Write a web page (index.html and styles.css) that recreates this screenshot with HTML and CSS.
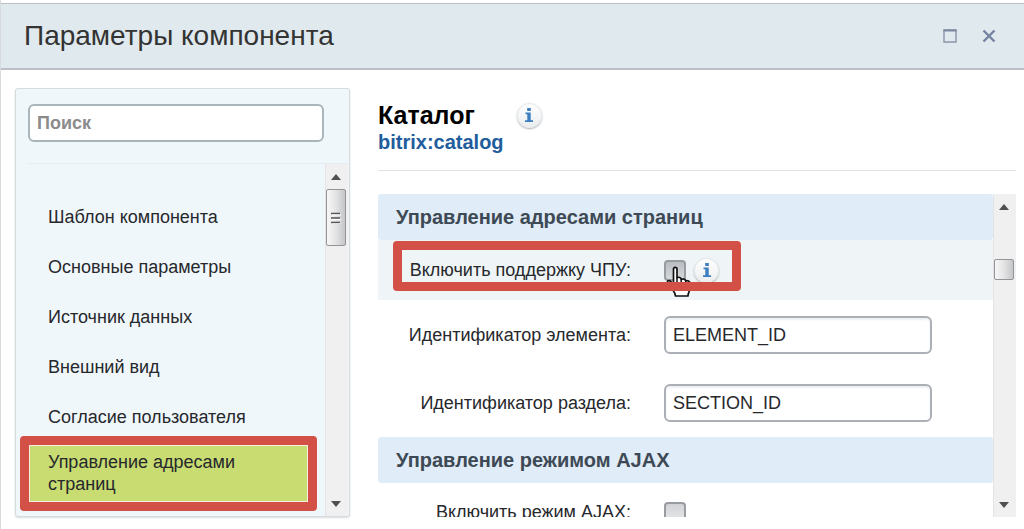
FILE: index.html
```html
<!DOCTYPE html>
<html lang="ru">
<head>
<meta charset="utf-8">
<title>Параметры компонента</title>
<meta name="viewport" content="width=device-width, initial-scale=1">
<link rel="stylesheet" href="styles.css">
</head>
<body>
<div class="dialog">
  <header class="dialog-header">
    <h1 class="dialog-title">Параметры компонента</h1>
    <div class="window-buttons">
      <button class="window-button" type="button" aria-label="Развернуть">
        <svg width="14" height="14" viewBox="0 0 14 14"><path d="M1 1h12v12H1z" fill="none" stroke="#8c94ab" stroke-width="1.4"/><path d="M0.500 1.500h13" stroke="#7c86a1" stroke-width="2"/></svg>
      </button>
      <button class="window-button" type="button" aria-label="Закрыть">
        <svg width="14" height="14" viewBox="0 0 14 14"><path d="M1.500 1.500l11 11M12.500 1.500l-11 11" stroke="#7583a2" stroke-width="2.4"/></svg>
      </button>
    </div>
  </header>
  <div class="dialog-body">
    <aside class="sidebar">
      <input class="search" type="search" placeholder="Поиск" aria-label="Поиск">
      <div class="sidebar-scroll">
        <nav class="menu">
          <a class="menu-item" href="#template">Шаблон компонента</a>
          <a class="menu-item" href="#base">Основные параметры</a>
          <a class="menu-item" href="#source">Источник данных</a>
          <a class="menu-item" href="#visual">Внешний вид</a>
          <a class="menu-item" href="#consent">Согласие пользователя</a>
          <a class="menu-item menu-item-active" href="#sef">Управление адресами страниц<span class="marker"></span></a>
        </nav>
        <div class="scrollbar scrollbar-menu">
          <svg class="arrow" width="10" height="6" viewBox="0 0 10 6"><path d="M0 6L5 0l5 6z" fill="#505050"/></svg>
          <div class="thumb">
            <svg width="10" height="12" viewBox="0 0 10 12"><path d="M0 1.500h9M0 6h9M0 10.500h9" stroke="#555" stroke-width="1.600"/><path d="M1 3h9M1 7.500h9M1 12h9" stroke="#fff"/></svg>
          </div>
          <svg class="arrow arrow-down" width="10" height="6" viewBox="0 0 10 6"><path d="M0 0h10L5 6z" fill="#505050"/></svg>
        </div>
      </div>
    </aside>
    <main class="content">
      <div class="component">
        <div class="component-name">
          <h2 class="component-title">Каталог</h2>
          <button class="info" type="button" aria-label="Справка">
            <svg width="10" height="14" viewBox="0 0 10 14"><path d="M3.200 0h3.600v3H3.200zM1.500 4.500h5.200v7.700H9V14H1v-1.800h2.300V6.300H1.500z" fill="#3c7fc0"/></svg>
          </button>
        </div>
        <a class="component-code" href="#catalog">bitrix:catalog</a>
      </div>
      <div class="params-scroll">
        <form class="params">
          <h3 class="section">Управление адресами страниц</h3>
          <div class="row row-hover">
            <label class="row-label" for="sef">Включить поддержку ЧПУ:</label>
            <div class="row-control">
              <input class="check check-hover" type="checkbox" id="sef">
              <button class="info" type="button" aria-label="Подсказка">
                <svg width="10" height="14" viewBox="0 0 10 14"><path d="M3.200 0h3.600v3H3.200zM1.500 4.500h5.200v7.700H9V14H1v-1.800h2.300V6.300H1.500z" fill="#3c7fc0"/></svg>
              </button>
              <svg class="cursor" width="26" height="32" viewBox="0 0 26 32"><path d="M7.500 3C7.500 .8 11 .8 11 3V12C12.500 10.500 15.200 11.500 15.200 13.500C17 12.500 19.500 13 19.700 15C21.500 14.200 24 15.200 24 17.500V22C24 25 22 26.500 22 30H9.500C9.500 26 6 24 4.500 20.500L1.800 17C.6 15 3 13.800 4.800 15.500L7.500 18.500z" fill="#fff" stroke="#111" stroke-width="1.700" stroke-linejoin="round"/><path d="M11 12v6M15.200 13.500v5M19.700 15v4.500" stroke="#111" stroke-width="1.500"/></svg>
            </div>
            <span class="marker marker-row"></span>
          </div>
          <div class="row">
            <label class="row-label" for="element">Идентификатор элемента:</label>
            <div class="row-control"><input class="field" type="text" id="element" value="ELEMENT_ID"></div>
          </div>
          <div class="row">
            <label class="row-label" for="section">Идентификатор раздела:</label>
            <div class="row-control"><input class="field" type="text" id="section" value="SECTION_ID"></div>
          </div>
          <h3 class="section">Управление режимом AJAX</h3>
          <div class="row row-check">
            <label class="row-label" for="ajax">Включить режим AJAX:</label>
            <div class="row-control"><input class="check" type="checkbox" id="ajax"></div>
          </div>
        </form>
        <div class="scrollbar scrollbar-params">
          <svg class="arrow" width="10" height="6" viewBox="0 0 10 6"><path d="M0 6L5 0l5 6z" fill="#505050"/></svg>
          <div class="thumb"></div>
          <svg class="arrow arrow-down" width="10" height="6" viewBox="0 0 10 6"><path d="M0 0h10L5 6z" fill="#505050"/></svg>
        </div>
      </div>
    </main>
  </div>
</div>
</body>
</html>
```

FILE: styles.css
```css
* { box-sizing: border-box; }

body {
  margin: 0;
  background: #fff;
  color: #26282c;
  font: 18px/22px "Liberation Sans", Arial, sans-serif;
}

.dialog {
  display: flex;
  flex-direction: column;
  height: 100vh;
  padding-top: 3px;
  border-left: 1px solid #d8dadd;
}

.dialog-header {
  display: flex;
  flex: none;
  align-items: center;
  justify-content: space-between;
  height: 67px;
  padding: 0 28px 0 23px;
  border-top: 1px solid #bcbec5;
  border-bottom: 2px solid #bdbec6;
  background: #e0e9ed;
}

.dialog-title {
  margin: 0;
  color: #333;
  font-size: 28px;
  font-weight: 400;
  line-height: 32px;
}

.window-buttons { display: flex; gap: 25px; }

.window-button {
  display: flex;
  padding: 0;
  border: 0;
  background: none;
}

.dialog-body {
  display: flex;
  flex: 1;
  gap: 28px;
  min-height: 0;
  padding: 18px 8px 12px 14px;
}

.sidebar {
  display: flex;
  flex: none;
  flex-direction: column;
  width: 335px;
  padding: 15px 1px 0 12px;
  border: 1px solid #d5dbde;
  border-radius: 3px;
  background: #f0f7fb;
  box-shadow: 0 1px 2px #d9dcde;
}

.search {
  flex: none;
  width: 296px;
  height: 38px;
  margin-bottom: 21px;
  padding: 0 7px;
  border: 2px solid #aab5ba;
  border-radius: 6px;
  background: #fff;
  font: bold 18px/22px "Liberation Sans", Arial, sans-serif;
}

.search::placeholder { color: #8b8b8d; opacity: 1; }

.sidebar-scroll {
  display: flex;
  flex: 1;
  min-height: 0;
  border-top: 1px solid #e4edf0;
}

.menu { flex: 1; padding: 28px 16px 0 0; }

.menu-item {
  display: block;
  padding: 14px 20px;
  color: #26282c;
  text-decoration: none;
}

.menu-item-active {
  position: relative;
  margin-top: 2px;
  padding: 5px 70px 6px 20px;
  border-top: 2px solid #a3bb5e;
  background: #c8dc72;
}

.marker {
  position: absolute;
  inset: -10px -8px;
  border: 9px solid #d25046;
  border-radius: 4px;
  box-shadow: inset 0 0 0 1px #f5f0df;
}

.marker-row { inset: 1px 252px 9px 15px; box-shadow: none; }

.scrollbar {
  display: flex;
  flex: none;
  flex-direction: column;
  align-items: center;
  width: 23px;
  padding: 10px 2px 9px 0;
  border-left: 1px solid #e4e4e6;
  background: #f0f0f0;
}

.thumb {
  display: flex;
  align-items: center;
  justify-content: center;
  width: 20px;
  border: 1px solid #949497;
  border-radius: 2px;
  background: linear-gradient(90deg, #f7f7f7, #e6e6e7 45%, #c5c6c9);
}

.scrollbar-menu .thumb { height: 57px; margin-top: 9px; }
.scrollbar-params .thumb { height: 21px; margin-top: 49px; }
.arrow-down { margin-top: auto; }

.content {
  display: flex;
  flex: 1;
  flex-direction: column;
  min-width: 0;
  padding-top: 12px;
}

.component {
  flex: none;
  margin-bottom: 23px;
  padding-bottom: 15px;
  border-bottom: 1px solid #e0e2e4;
}

.component-name { display: flex; gap: 42px; align-items: center; }

.component-title {
  margin: 0;
  color: #000;
  font-size: 25px;
  line-height: 30px;
}

.component-code {
  display: block;
  color: #215d9c;
  font-size: 20px;
  font-weight: 700;
  line-height: 25px;
  text-decoration: none;
}

.info {
  display: flex;
  align-items: center;
  justify-content: center;
  width: 25px;
  height: 25px;
  padding: 0;
  border: 1px solid #e6e8ea;
  border-radius: 50%;
  background: linear-gradient(#fff, #ebedef);
  box-shadow: 0 1px 2px #a9aeb3;
}

.params-scroll { display: flex; flex: 1; min-height: 0; }

.params { flex: 1; min-width: 0; overflow: hidden; }

.section {
  margin: 0;
  padding: 11px 18px;
  border-radius: 3px;
  background: #e0ecf7;
  color: #3d4a55;
  font-size: 20px;
  line-height: 24px;
}

.row {
  display: grid;
  grid-template-columns: 253px 1fr;
  column-gap: 33px;
  align-items: center;
  height: 68px;
}

.row-hover {
  position: relative;
  height: 60px;
  margin-bottom: 1px;
  background: #eff5f6;
}

.row-check { height: 58px; }

.row-label { text-align: right; white-space: nowrap; }

.row-control { position: relative; display: flex; gap: 8px; align-items: center; }

.field {
  width: 268px;
  height: 38px;
  padding: 0 7px;
  border: 2px solid #acafb6;
  border-radius: 6px;
  background: #fff;
  box-shadow: inset 0 2px 2px #edf0f2;
  color: #26282c;
  font: 18px/22px "Liberation Sans", Arial, sans-serif;
}

.check {
  width: 22px;
  height: 21px;
  margin: 0;
  appearance: none;
  border: 2px solid #989ba0;
  border-radius: 4px;
  background: linear-gradient(#d0d2d5, #e6e8e9);
}

.check-hover { background: linear-gradient(#b9bdc1, #d6d9dc); }

.cursor { position: absolute; top: 8px; left: 2px; }
```
